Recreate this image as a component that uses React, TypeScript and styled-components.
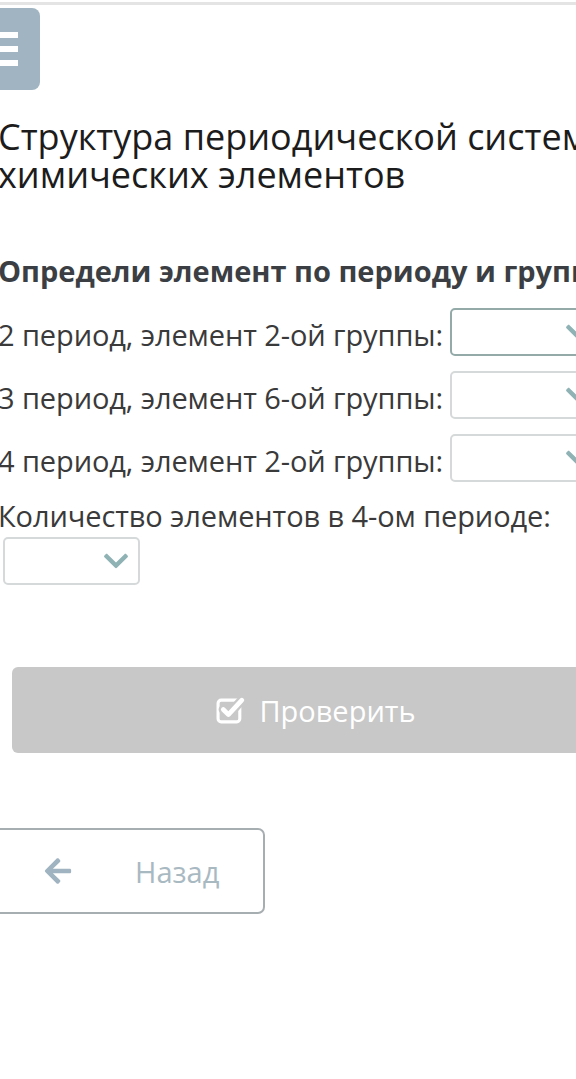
import React from 'react';
import styled, { createGlobalStyle } from 'styled-components';
import { FaChevronDown, FaArrowLeft } from 'react-icons/fa';

const Global = createGlobalStyle`
  html, body {
    margin: 0;
    padding: 0;
    background: #fff;
    overflow: hidden;
  }
  body {
    font-family: "Open Sans", "Noto Sans", sans-serif;
  }
`;

const TopLine = styled.div`
  height: 3px;
  margin-top: 2px;
  background: #e4e4e4;
`;

const Page = styled.div`
  width: 660px;
  margin-left: -18px;
  padding-left: 16px;
`;

const MenuButton = styled.div`
  width: 58px;
  height: 82px;
  margin: 3px 0 0 -16px;
  border-radius: 8px;
  background: #a0b4c2;
  display: flex;
  flex-direction: column;
  justify-content: center;
  align-items: flex-end;
  gap: 8px;
  padding-right: 22px;
  box-sizing: border-box;
`;

const Bar = styled.span`
  display: block;
  width: 34px;
  height: 6px;
  background: #fff;
`;

const Title = styled.h1`
  margin: 28px 0 0;
  font-size: 36px;
  line-height: 38px;
  font-weight: 400;
  color: #1c1c1c;
`;

const Subtitle = styled.h2`
  margin: 60px 0 0;
  font-size: 29px;
  line-height: 34px;
  font-weight: 700;
  color: #3b3f44;
  white-space: nowrap;
`;

const Row = styled.div<{ $first?: boolean }>`
  display: flex;
  align-items: center;
  gap: 7px;
  margin-top: ${p => (p.$first ? '20px' : '15px')};
`;

const StackRow = styled.div`
  display: flex;
  flex-direction: column;
  align-items: flex-start;
  margin-top: 16px;
`;

const Label = styled.span<{ $shift?: boolean }>`
  font-size: 29px;
  line-height: 36px;
  letter-spacing: -0.1px;
  padding-top: ${p => (p.$shift ? '6px' : '0')};
  color: #3a3a3a;
  white-space: nowrap;
`;

const Select = styled.div<{ $w: number; $focused?: boolean }>`
  width: ${p => p.$w}px;
  height: 48px;
  box-sizing: border-box;
  border: 2px solid ${p => (p.$focused ? '#93aaa9' : '#d6d9da')};
  border-radius: 5px;
  display: flex;
  align-items: center;
  justify-content: flex-end;
  padding-right: 8px;
  color: #8fb2b4;
  font-size: 28px;
  flex: none;
`;

const Stacked = styled.div`
  margin-left: 5px;
  margin-top: 3px;
`;

const CheckButton = styled.button`
  margin: 82px 0 0 14px;
  width: 608px;
  height: 86px;
  border: none;
  border-radius: 6px;
  background: #c8c8c8;
  color: #fff;
  font-family: inherit;
  font-size: 29px;
  display: flex;
  align-items: center;
  justify-content: center;
  gap: 13px;
`;

const BackButton = styled.button`
  margin: 75px 0 0 -30px;
  width: 297px;
  height: 86px;
  box-sizing: border-box;
  border: 2px solid #a7aeb1;
  border-radius: 7px;
  background: #fff;
  font-family: inherit;
  font-size: 29px;
  color: #a9b9c2;
  display: flex;
  align-items: center;
  padding-left: 73px;
  gap: 62px;
`;

const ArrowIcon = styled(FaArrowLeft)`
  color: #9fb3c0;
  font-size: 30px;
`;

const CheckIcon = () => (
  <svg width="30" height="28" viewBox="0 0 29 27">
    <rect x="2" y="4" width="21" height="21" rx="3" fill="none" stroke="#fff" strokeWidth="3" />
    <polyline points="7,13 12,18 25,4" fill="none" stroke="#c8c8c8" strokeWidth="9" strokeLinecap="round" strokeLinejoin="round" />
    <polyline points="7,13 12,18 25,4" fill="none" stroke="#fff" strokeWidth="4.5" strokeLinecap="round" strokeLinejoin="round" />
  </svg>
);

const rows = [
  { text: '2 период, элемент 2-ой группы:', focused: true },
  { text: '3 период, элемент 6-ой группы:' },
  { text: '4 период, элемент 2-ой группы:' },
];

export default function App() {
  return (
    <>
      <Global />
      <TopLine />
      <Page>
        <MenuButton>
          <Bar />
          <Bar />
          <Bar />
        </MenuButton>
        <Title>Структура периодической системы химических элементов</Title>
        <Subtitle>Определи элемент по периоду и группе:</Subtitle>
        {rows.map((r, i) => (
          <Row key={i} $first={i === 0}>
            <Label $shift>{r.text}</Label>
            <Select $w={152} $focused={r.focused}>
              <FaChevronDown />
            </Select>
          </Row>
        ))}
        <StackRow>
          <Label>Количество элементов в 4-ом периоде:</Label>
          <Stacked>
            <Select $w={137}>
              <FaChevronDown />
            </Select>
          </Stacked>
        </StackRow>
        <CheckButton>
          <CheckIcon />
          Проверить
        </CheckButton>
        <BackButton>
          <ArrowIcon />
          Назад
        </BackButton>
      </Page>
    </>
  );
}
